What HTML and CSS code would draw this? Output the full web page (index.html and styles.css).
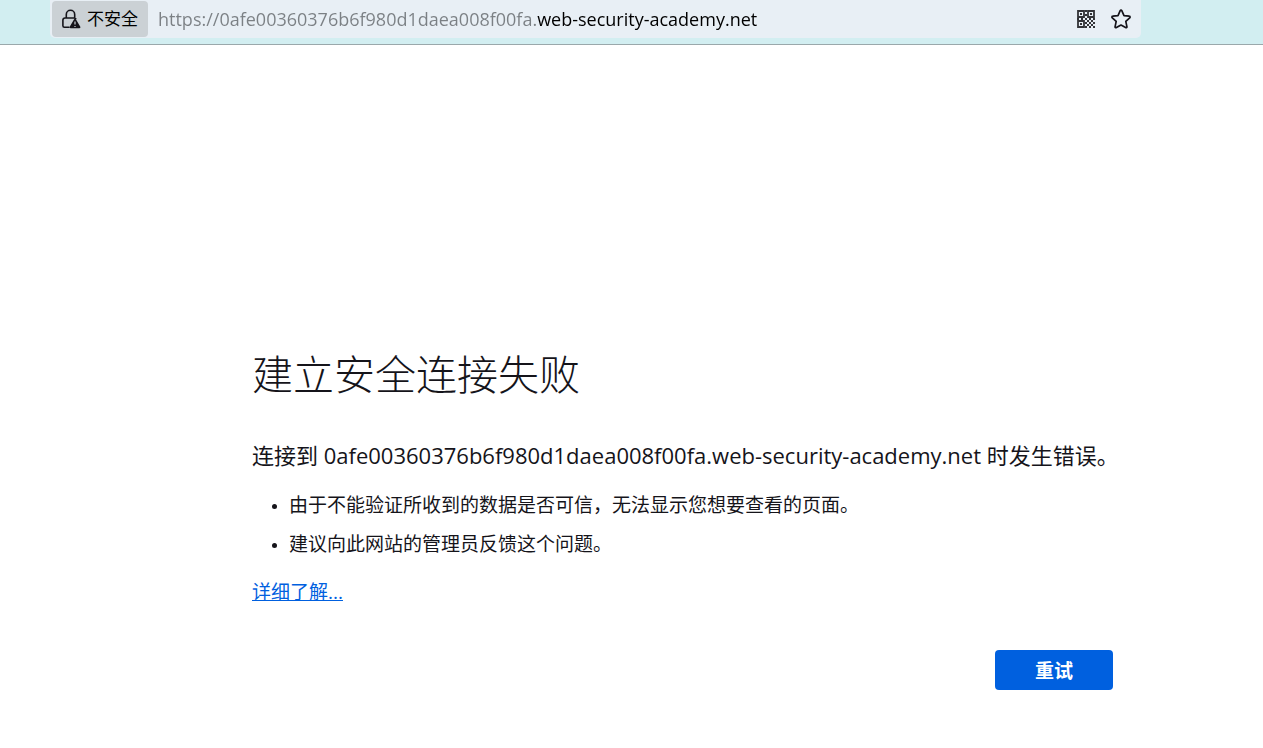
FILE: index.html
```html
<!DOCTYPE html>
<html lang="zh-CN">
<head>
<meta charset="utf-8">
<meta name="viewport" content="width=device-width, initial-scale=1">
<title>建立安全连接失败</title>
<link rel="stylesheet" href="styles.css">
</head>
<body>
<header class="toolbar">
  <div class="urlbar">
    <button class="identity" type="button">
      <svg width="20" height="20" viewBox="0 0 20 20" aria-hidden="true">
        <path d="M5.300 9V5.500a4.200 4.200 0 0 1 8.400 0V9M8 18.200H3.400a1.500 1.500 0 0 1-1.500-1.500v-5.600A2 2 0 0 1 3.900 9h9.500a2 2 0 0 1 1.300.6" fill="none" stroke="#15141a" stroke-width="1.600" stroke-linecap="round"/>
        <path d="M14 9.800a1 1 0 0 1 .9.500l4.400 7.400a1 1 0 0 1-.9 1.500H9.600a1 1 0 0 1-.9-1.500l4.400-7.400a1 1 0 0 1 .9-.5z" fill="#15141a"/>
        <path d="M14 12.600v3M14 17v1" stroke="#cbd1d5" stroke-width="1.200"/>
      </svg>
      <span>不安全</span>
    </button>
    <input class="address" type="text" aria-label="网址" spellcheck="false" value="https://0afe00360376b6f980d1daea008f00fa.web-security-academy.net">
    <button class="action" type="button" aria-label="二维码">
      <svg width="20" height="20" viewBox="0 0 20 20" aria-hidden="true">
        <path d="M2 2h6v6H2zM12 2h6v6h-6zM2 12h6v6H2z" fill="none" stroke="#333438" stroke-width="1.800"/>
        <path d="M4 4h2v2H4zM14 4h2v2h-2zM4 14h2v2H4zM9 1h2v2H9zM9 5h2v2H9zM1 9h2v2H1zM5 9h2v2H5zM9 9h2v2H9zM13 9h2v2h-2zM17 9h2v2h-2zM11 11h2v2h-2zM15 11h2v2h-2zM9 13h2v2H9zM13 13h2v2h-2zM17 13h2v2h-2zM11 15h2v2h-2zM15 15h2v2h-2zM9 17h2v2H9zM13 17h2v2h-2zM17 17h2v2h-2z" fill="#333438"/>
      </svg>
    </button>
    <button class="action" type="button" aria-label="添加书签">
      <svg width="20" height="20" viewBox="0 0 20 20" aria-hidden="true">
        <path d="M9.200 1.700a.9.900 0 0 1 1.600 0l2.200 4.900 5.200.6a.9.900 0 0 1 .5 1.600l-3.900 3.600 1.100 5.200a.9.900 0 0 1-1.300 1L10 16l-4.600 2.600a.9.900 0 0 1-1.300-1l1.100-5.200-3.900-3.600a.9.900 0 0 1 .5-1.600l5.200-.6z" fill="none" stroke="#15141a" stroke-width="1.700" stroke-linejoin="round"/>
      </svg>
    </button>
  </div>
</header>
<main class="page">
  <section class="error">
    <h1 class="title">建立安全连接失败</h1>
    <p class="summary">连接到 0afe00360376b6f980d1daea008f00fa.web-security-academy.net 时发生错误。</p>
    <ul class="reasons">
      <li>由于不能验证所收到的数据是否可信，无法显示您想要查看的页面。</li>
      <li>建议向此网站的管理员反馈这个问题。</li>
    </ul>
    <a class="more" href="#">详细了解...</a>
    <div class="actions"><button class="retry" type="button">重试</button></div>
  </section>
</main>
</body>
</html>
```
FILE: styles.css
```css
* {
  box-sizing: border-box;
}

body {
  margin: 0;
  min-height: 100vh;
  display: flex;
  flex-direction: column;
  background: #fff;
  color: #15141a;
  font-family: "Open Sans", "Noto Sans CJK SC", sans-serif;
}

button,
input {
  border: 0;
  font: inherit;
}

.toolbar {
  height: 45px;
  padding: 0 122px 6px 50px;
  background: #d2eef1;
  border-bottom: 1px solid #9aa8ab;
}

.urlbar {
  height: 38px;
  display: flex;
  align-items: center;
  padding: 0 10px 0 2px;
  background: #e8eff5;
  border-radius: 0 0 5px 5px;
}

.identity {
  height: 36px;
  display: flex;
  align-items: center;
  gap: 6px;
  padding: 0 10px 0 9px;
  background: #cbd1d5;
  border-radius: 4px;
  color: #000;
  font-size: 17px;
  line-height: 24px;
}

.address {
  flex: 1;
  min-width: 0;
  padding: 0 10px;
  background: linear-gradient(to right, #7b8084 389px, #000 389px);
  background-clip: text;
  color: transparent;
  font-size: 18px;
  line-height: 24px;
}

.action {
  display: flex;
  padding: 0;
  margin-left: 15px;
  background: transparent;
}

.page {
  flex: 1;
  display: flex;
  align-items: flex-end;
  padding: 0 130px 58px 252px;
}

.error {
  flex: 1;
}

.title {
  margin: 0 0 34px;
  font-size: 41px;
  font-weight: 300;
  line-height: 62px;
}

.summary {
  margin: 0 0 20px;
  font-size: 22px;
  line-height: 32px;
}

.reasons {
  display: grid;
  gap: 11px;
  margin: 0 0 20px;
  padding-left: 37px;
  font-size: 19px;
  line-height: 28px;
}

.reasons li::marker {
  font-size: 14px;
}

.more {
  color: #0060df;
  font-size: 19px;
  line-height: 28px;
}

.actions {
  display: flex;
  justify-content: flex-end;
  margin-top: 44px;
  padding-right: 20px;
}

.retry {
  min-width: 118px;
  height: 40px;
  background: #0060df;
  border-radius: 4px;
  color: #fff;
  font-size: 19px;
  font-weight: 700;
}
```
